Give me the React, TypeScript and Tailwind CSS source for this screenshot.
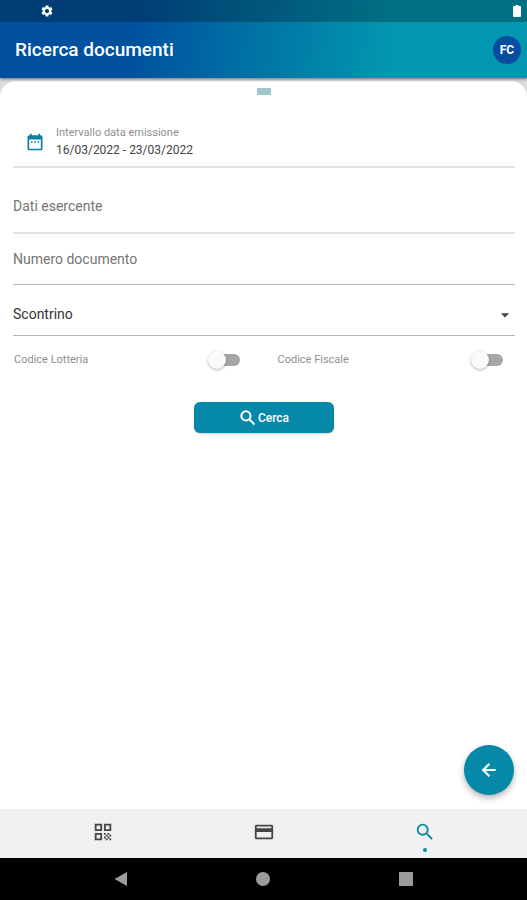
import { useState } from 'react';
import {
  MdArrowDropDown,
  MdCreditCard,
  MdDateRange,
  MdQrCode,
  MdSearch,
  MdSettings,
} from 'react-icons/md';

const tabs = [
  { id: 'scan', label: 'Scansiona', icon: MdQrCode },
  { id: 'cards', label: 'Carte', icon: MdCreditCard },
  { id: 'search', label: 'Ricerca', icon: MdSearch },
];

function Toggle({ id, label }: { id: string; label: string }) {
  return (
    <label htmlFor={id} className="flex items-center justify-between pl-[14px] pr-6 text-[11px] leading-4 text-[#8f8f8f]">
      {label}
      <span className="relative flex h-5 w-8 items-center justify-end">
        <input id={id} type="checkbox" className="peer sr-only" />
        <span className="h-3 w-7 rounded-full bg-[#a6a6a6] peer-checked:bg-[#7cc3d1]" />
        <span className="absolute left-0 size-[18px] rounded-full bg-[#fafafa] shadow-[0_1px_3px_rgba(0,0,0,0.3)] peer-checked:left-[14px] peer-checked:bg-[#0688a9]" />
      </span>
    </label>
  );
}

export default function App() {
  const [activeTab, setActiveTab] = useState('search');
  const [store, setStore] = useState('');
  const [docNumber, setDocNumber] = useState('');

  return (
    <div className="flex min-h-screen flex-col bg-[#dcdcdf] font-['Roboto',sans-serif]">
      <header className="z-10 bg-[linear-gradient(97deg,#00509e_25%,#0072a4_48%,#0396b0_74%)] text-white shadow-[0_1px_3px_rgba(0,0,0,0.5)]">
        <div className="flex h-[22px] items-center justify-between bg-black/25 pl-10 pr-[6px]">
          <MdSettings className="size-[14px]" />
          <svg viewBox="0 0 8 12" className="h-3 w-2" fill="currentColor">
            <path d="M2.5 0h3v1H7a1 1 0 0 1 1 1v9a1 1 0 0 1-1 1H1a1 1 0 0 1-1-1V2a1 1 0 0 1 1-1h1.500z" />
          </svg>
        </div>
        <div className="flex h-14 items-center justify-between pl-[15px] pr-[6px]">
          <h1 className="text-[19px] font-medium">Ricerca documenti</h1>
          <button className="size-7 rounded-full bg-[#084da0] text-xs font-bold" aria-label="Profilo">
            FC
          </button>
        </div>
      </header>

      <main className="relative mt-[3px] flex-1 rounded-t-2xl bg-white pt-[7px]">
        <div className="mx-auto h-[7px] w-[14px] bg-[#9fc8cc]" />

        <form onSubmit={(e) => e.preventDefault()}>
          <div className="mx-3 pl-px">
            <button type="button" className="flex h-[73px] w-full items-center border-b-2 border-[#e2e2e2] pl-3 pt-[22px] text-left">
              <MdDateRange className="mr-[11px] size-5 text-[#0d7fa5]" />
              <span className="flex flex-col">
                <span className="text-[11px] leading-4 text-[#8f8f8f]">Intervallo data emissione</span>
                <span className="text-xs leading-[18px] text-[#444444]">16/03/2022 - 23/03/2022</span>
              </span>
            </button>
            <input
              type="text"
              aria-label="Dati esercente"
              placeholder="Dati esercente"
              value={store}
              onChange={(e) => setStore(e.target.value)}
              className="block h-[66px] w-full border-b-2 border-[#e2e2e2] pt-3 text-sm text-[#333333] outline-none placeholder:text-[#757575]"
            />
            <input
              type="text"
              aria-label="Numero documento"
              placeholder="Numero documento"
              value={docNumber}
              onChange={(e) => setDocNumber(e.target.value)}
              className="block h-[51px] w-full border-b border-[#b5b5b5] text-sm text-[#333333] outline-none placeholder:text-[#757575]"
            />
            <div className="relative">
              <select
                aria-label="Tipo documento"
                className="block h-[51px] w-full appearance-none border-b border-[#b5b5b5] pt-2 text-sm text-[#333333] outline-none"
              >
                <option>Scontrino</option>
                <option>Fattura</option>
              </select>
              <MdArrowDropDown className="pointer-events-none absolute right-0 top-5 size-5 text-[#444444]" />
            </div>
          </div>

          <div className="mt-[14px] grid grid-cols-2">
            <Toggle id="lotteria" label="Codice Lotteria" />
            <Toggle id="fiscale" label="Codice Fiscale" />
          </div>

          <button
            type="submit"
            className="mx-auto mt-8 flex h-[31px] w-[140px] items-center justify-center rounded-md bg-[#0688a9] text-xs font-medium text-white shadow-[0_1px_2px_rgba(0,0,0,0.2)]"
          >
            <svg viewBox="0 0 24 24" className="size-5" fill="none" stroke="currentColor" strokeWidth="2.4">
              <circle cx="9.5" cy="9.5" r="5.500" />
              <path d="M13.800 13.800l6 6" />
            </svg>
            Cerca
          </button>
        </form>

        <button
          aria-label="Indietro"
          className="absolute bottom-[14px] right-[13px] flex size-[50px] items-center justify-center rounded-full bg-[#0688a9] text-white shadow-[0_3px_6px_rgba(0,0,0,0.3)]"
        >
          <svg viewBox="0 0 24 24" className="size-5" fill="none" stroke="currentColor" strokeWidth="2.6">
            <path d="M20 12H5.500M12.500 4.500L5 12l7.500 7.500" />
          </svg>
        </button>
      </main>

      <nav className="grid h-[49px] grid-cols-3 bg-[#f1f1f1] px-[22px]">
        {tabs.map(({ id, label, icon: Icon }) => (
          <button
            key={id}
            aria-label={label}
            onClick={() => setActiveTab(id)}
            className={`flex flex-col items-center gap-[5px] pt-3 ${activeTab === id ? 'text-[#0d87a9]' : 'text-[#444444]'}`}
          >
            <Icon className="size-[22px]" />
            {activeTab === id && <span className="size-1 rounded-full bg-[#0d87a9]" />}
          </button>
        ))}
      </nav>

      <footer className="grid h-[42px] grid-cols-3 items-center justify-items-center bg-black px-[50px] text-[#9b9b9b]">
        <svg viewBox="0 0 14 16" className="h-4 w-[14px]" fill="currentColor">
          <path d="M0.500 8L13 1v14z" />
        </svg>
        <span className="size-[14px] rounded-full bg-[#9b9b9b]" />
        <span className="size-[14px] bg-[#9b9b9b]" />
      </footer>
    </div>
  );
}
